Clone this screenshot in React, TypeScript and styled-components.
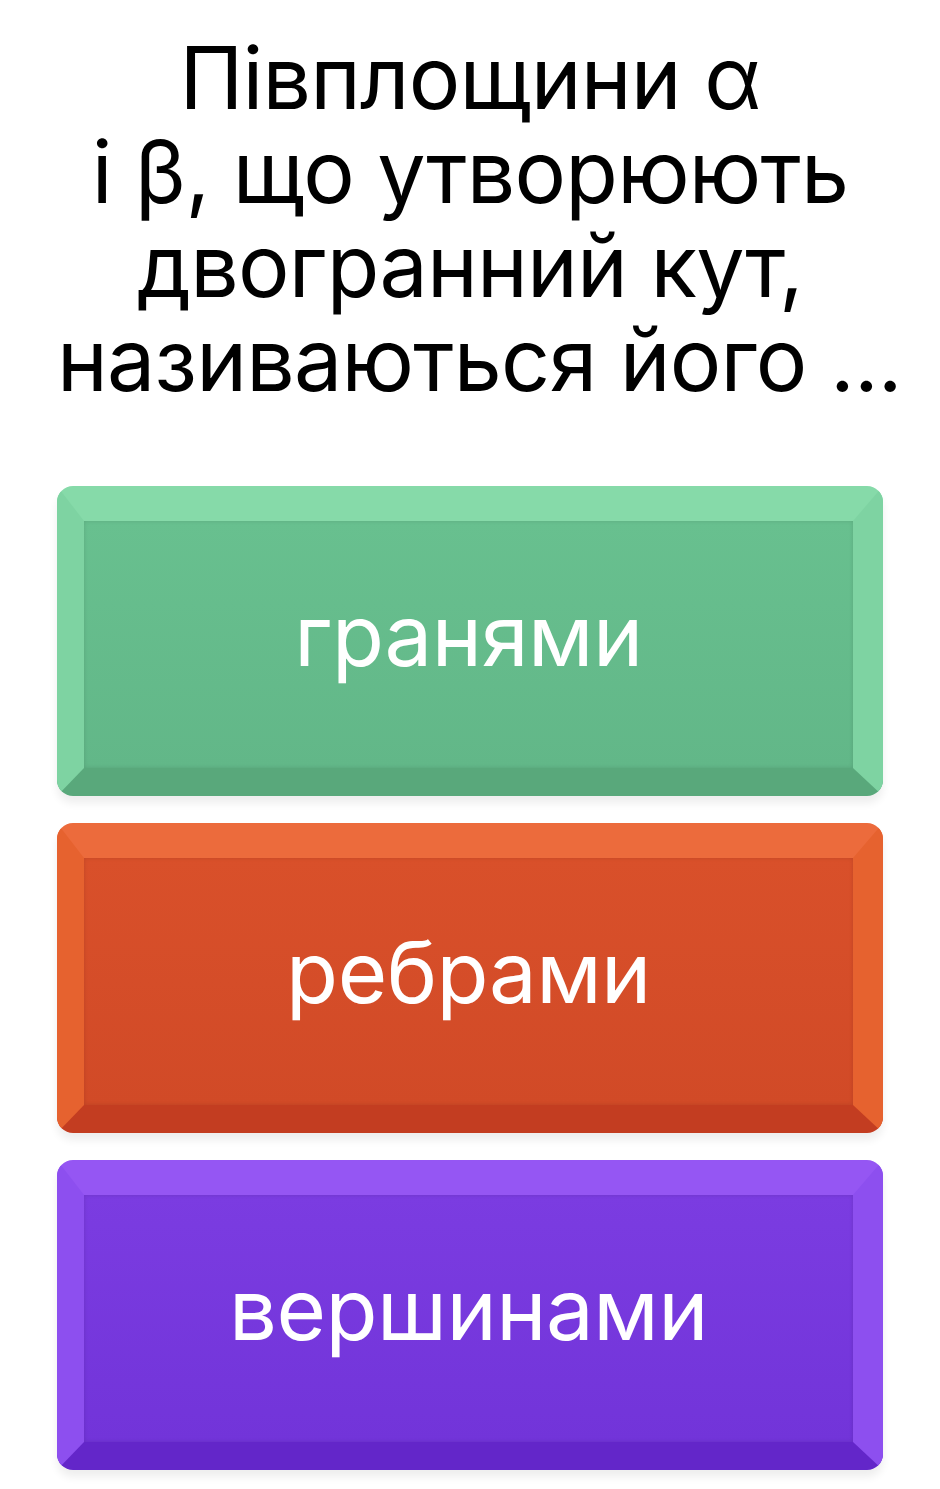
import styled, { createGlobalStyle } from "styled-components";

const GlobalStyle = createGlobalStyle`
	html, body {
		margin: 0;
		padding: 0;
		background: #ffffff;
	}
	body {
		font-family: Inter, "Noto Sans", "Liberation Sans", sans-serif;
		-webkit-font-smoothing: antialiased;
	}
`;

const Page = styled.main`
	display: flex;
	flex-direction: column;
	padding: 31px 57px 21px;
`;

const Question = styled.h1`
	margin: 0 0 79px;
	font-size: 86px;
	line-height: 94px;
	font-weight: 400;
	letter-spacing: -0.8px;
	color: #000000;
	text-align: center;

	span {
		display: block;
		white-space: nowrap;
	}
`;

const Answers = styled.div`
	display: flex;
	flex-direction: column;
	gap: 27px;
`;

type Palette = { top: string; side: string; face: string; faceEnd: string; bottom: string };

const palettes: Record<string, Palette> = {
	green: { top: "#86daa9", side: "#7ed3a2", face: "#68c08f", faceEnd: "#62b788", bottom: "#59a87b" },
	orange: { top: "#ec6b3c", side: "#e6622f", face: "#d9502a", faceEnd: "#d14a27", bottom: "#c33d21" },
	purple: { top: "#9556f3", side: "#8d4fef", face: "#7b3ce1", faceEnd: "#7234d9", bottom: "#6326c9" },
};

const AnswerButton = styled.button<{ $tone: Palette }>`
	display: flex;
	align-items: center;
	justify-content: center;
	box-sizing: border-box;
	width: 100%;
	height: 310px;
	padding: 0 0 18px;
	border-style: solid;
	border-width: 35px 30px 28px 27px;
	border-color: ${p => p.$tone.top} ${p => p.$tone.side} ${p => p.$tone.bottom} ${p => p.$tone.side};
	border-radius: 16px;
	background: linear-gradient(180deg, ${p => p.$tone.face}, ${p => p.$tone.faceEnd});
	box-shadow: inset 0 0 4px rgba(0, 0, 0, 0.12), 0 7px 9px rgba(0, 0, 0, 0.07);
	font-family: inherit;
	font-size: 85px;
	font-weight: 400;
	letter-spacing: -0.5px;
	color: #ffffff;
	cursor: pointer;
`;

const answers = [
	{ label: "гранями", tone: "green" },
	{ label: "ребрами", tone: "orange" },
	{ label: "вершинами", tone: "purple" },
];

function App() {
	return (
		<>
			<GlobalStyle />
			<Page>
				<Question>
					<span>Півплощини α</span>
					<span>і β, що утворюють</span>
					<span>двогранний кут,</span>
					<span>називаються його ...</span>
				</Question>
				<Answers>
					{answers.map(a => (
						<AnswerButton key={a.label} $tone={palettes[a.tone]}>
							{a.label}
						</AnswerButton>
					))}
				</Answers>
			</Page>
		</>
	);
}

export default App;
